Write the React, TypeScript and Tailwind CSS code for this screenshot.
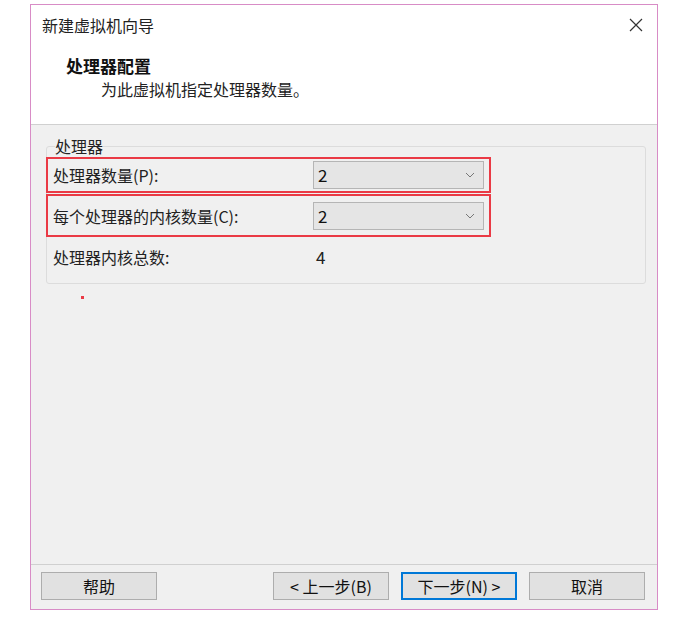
import React from 'react';

const font = { fontFamily: '"Noto Sans CJK SC", "Noto Sans", sans-serif' };

const Chevron = () => (
  <svg width="10" height="6" viewBox="0 0 10 6" className="text-[#777]">
    <path d="M1 1 L5 5 L9 1" fill="none" stroke="currentColor" strokeWidth="1" />
  </svg>
);

const Select = ({ value }: { value: string }) => (
  <div className="w-[171px] h-[28px] bg-[#e5e5e5] border border-[#b5b5b5] flex items-center justify-between pl-[4px] pr-[8px] text-[17px] text-[#111]">
    <span>{value}</span>
    <Chevron />
  </div>
);

const Btn = ({ label, primary }: { label: string; primary?: boolean }) => (
  <div
    className={`w-[116px] h-[28px] flex items-center justify-center text-[16px] text-[#111] bg-[#e1e1e1] ${
      primary ? 'border-2 border-[#0078d7]' : 'border border-[#adadad]'
    }`}
  >
    {label}
  </div>
);

export default function App() {
  return (
    <div className="w-[692px] h-[622px] bg-white pt-[4px] pl-[30px]" style={font}>
      <div className="w-[628px] h-[606px] border border-[#d88cc6] flex flex-col bg-[#f0f0f0]">
        {/* header */}
        <div className="bg-white h-[120px] border-b border-[#d0d0d0] flex flex-col">
          <div className="flex items-center justify-between pl-[11px] pr-[14px] pt-[7px] h-[32px]">
            <span className="text-[16px] text-[#222]">新建虚拟机向导</span>
            <svg width="14" height="14" viewBox="0 0 14 14" className="text-[#333]">
              <path d="M1 1 L13 13 M13 1 L1 13" stroke="currentColor" strokeWidth="1.2" fill="none" />
            </svg>
          </div>
          <div className="pl-[35px] pt-[18px] text-[17px] font-bold text-[#111] leading-[21px]">处理器配置</div>
          <div className="pl-[70px] pt-[3px] text-[16px] text-[#222] leading-[21px]">为此虚拟机指定处理器数量。</div>
        </div>

        {/* body */}
        <div className="flex-1 flex flex-col pl-[14px] pr-[11px] pt-[11px]">
          <div className="relative border border-[#dcdcdc] rounded-[3px] mt-[10px] ml-[1px] pt-[10px] pb-[6px]">
            <span className="absolute -top-[11px] left-[8px] text-[16px] text-[#222] bg-[#f0f0f0] leading-[21px]">处理器</span>
            <div className="-ml-[1px]">
              <div className="w-[445px] h-[36px] border-2 border-[#ea3a45] flex items-center pl-[5px] pr-[4px]">
                <span className="w-[260px] text-[16px] text-[#222]">处理器数量(P):</span>
                <Select value="2" />
              </div>
              <div className="w-[445px] h-[43px] border-2 border-[#ea3a45] mt-[1px] flex items-center pl-[5px] pr-[4px]">
                <span className="w-[260px] text-[16px] text-[#222]">每个处理器的内核数量(C):</span>
                <Select value="2" />
              </div>
              <div className="flex items-center pl-[7px] h-[40px]">
                <span className="w-[263px] text-[16px] text-[#222]">处理器内核总数:</span>
                <span className="text-[17px] text-[#222]">4</span>
              </div>
            </div>
          </div>
          <div className="ml-[36px] mt-[12px] w-[3px] h-[3px] bg-[#ea3a45]" />
        </div>

        {/* footer */}
        <div className="h-[45px] border-t border-[#d0d0d0] flex items-start pt-[7px] pl-[10px]">
          <Btn label="帮助" />
          <div className="ml-[116px]">
            <Btn label="< 上一步(B)" />
          </div>
          <div className="ml-[12px]">
            <Btn label="下一步(N) >" primary />
          </div>
          <div className="ml-[12px]">
            <Btn label="取消" />
          </div>
        </div>
      </div>
    </div>
  );
}
